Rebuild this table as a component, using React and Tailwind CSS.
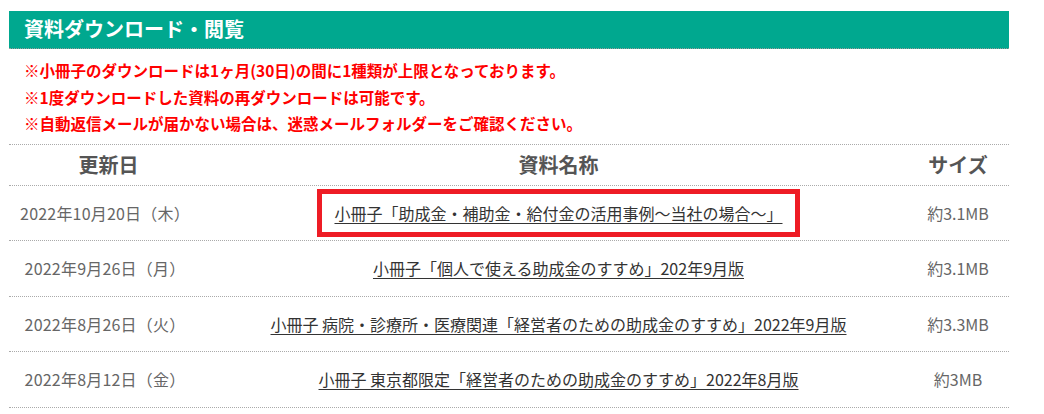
const rows = [
  { date: '2022年10月20日（木）', title: '小冊子「助成金・補助金・給付金の活用事例〜当社の場合〜」', size: '約3.1MB', marked: true },
  { date: '2022年9月26日（月）', title: '小冊子「個人で使える助成金のすすめ」202年9月版', size: '約3.1MB' },
  { date: '2022年8月26日（火）', title: '小冊子 病院・診療所・医療関連「経営者のための助成金のすすめ」2022年9月版', size: '約3.3MB' },
  { date: '2022年8月12日（金）', title: '小冊子 東京都限定「経営者のための助成金のすすめ」2022年8月版', size: '約3MB' },
]

const font = { fontFamily: '"Noto Sans CJK JP", "Noto Sans", sans-serif' }

export default function App() {
  return <div className="min-h-screen bg-white pt-[11px] pl-[9px]" style={font}>
    <div className="w-[1000px]">
      <h2 className="h-[38px] bg-[#00a88f] border-b border-dotted border-[#9a9a9a] text-white font-bold text-[20px] leading-[35px] pl-[15px]">資料ダウンロード・閲覧</h2>
      <div className="pl-[15px] pt-[8px] pb-[7px] text-[#ff0000] font-bold text-[15.5px] leading-[26.5px]">
        <p>※小冊子のダウンロードは1ヶ月(30日)の間に1種類が上限となっております。</p>
        <p>※1度ダウンロードした資料の再ダウンロードは可能です。</p>
        <p>※自動返信メールが届かない場合は、迷惑メールフォルダーをご確認ください。</p>
      </div>
      <div className="border-t border-dotted border-[#aaa]">
        <div className="grid grid-cols-[201px_697px_1fr] h-[41px] items-center border-b border-dotted border-[#aaa] text-[#555] font-bold text-[20px]">
          <div className="text-center pr-[2px]">更新日</div>
          <div className="text-center">資料名称</div>
          <div className="text-center">サイズ</div>
        </div>
        {rows.map((r, i) => <div key={i} className="grid grid-cols-[201px_697px_1fr] h-[55.5px] items-center border-b border-dotted border-[#aaa] text-[16px]">
          <div className="text-center text-[#666] pr-[9px] tracking-[0.2px]">{r.date}</div>
          <div className="text-center">
            {r.marked
              ? <span className="inline-block border-[5px] border-[#ee1c25] px-[12px] py-[7px]"><a href="#" className="text-[#333] underline underline-offset-[3px]">{r.title}</a></span>
              : <a href="#" className="text-[#333] underline underline-offset-[3px]">{r.title}</a>}
          </div>
          <div className="text-center text-[#666]">{r.size}</div>
        </div>)}
      </div>
    </div>
  </div>
}
